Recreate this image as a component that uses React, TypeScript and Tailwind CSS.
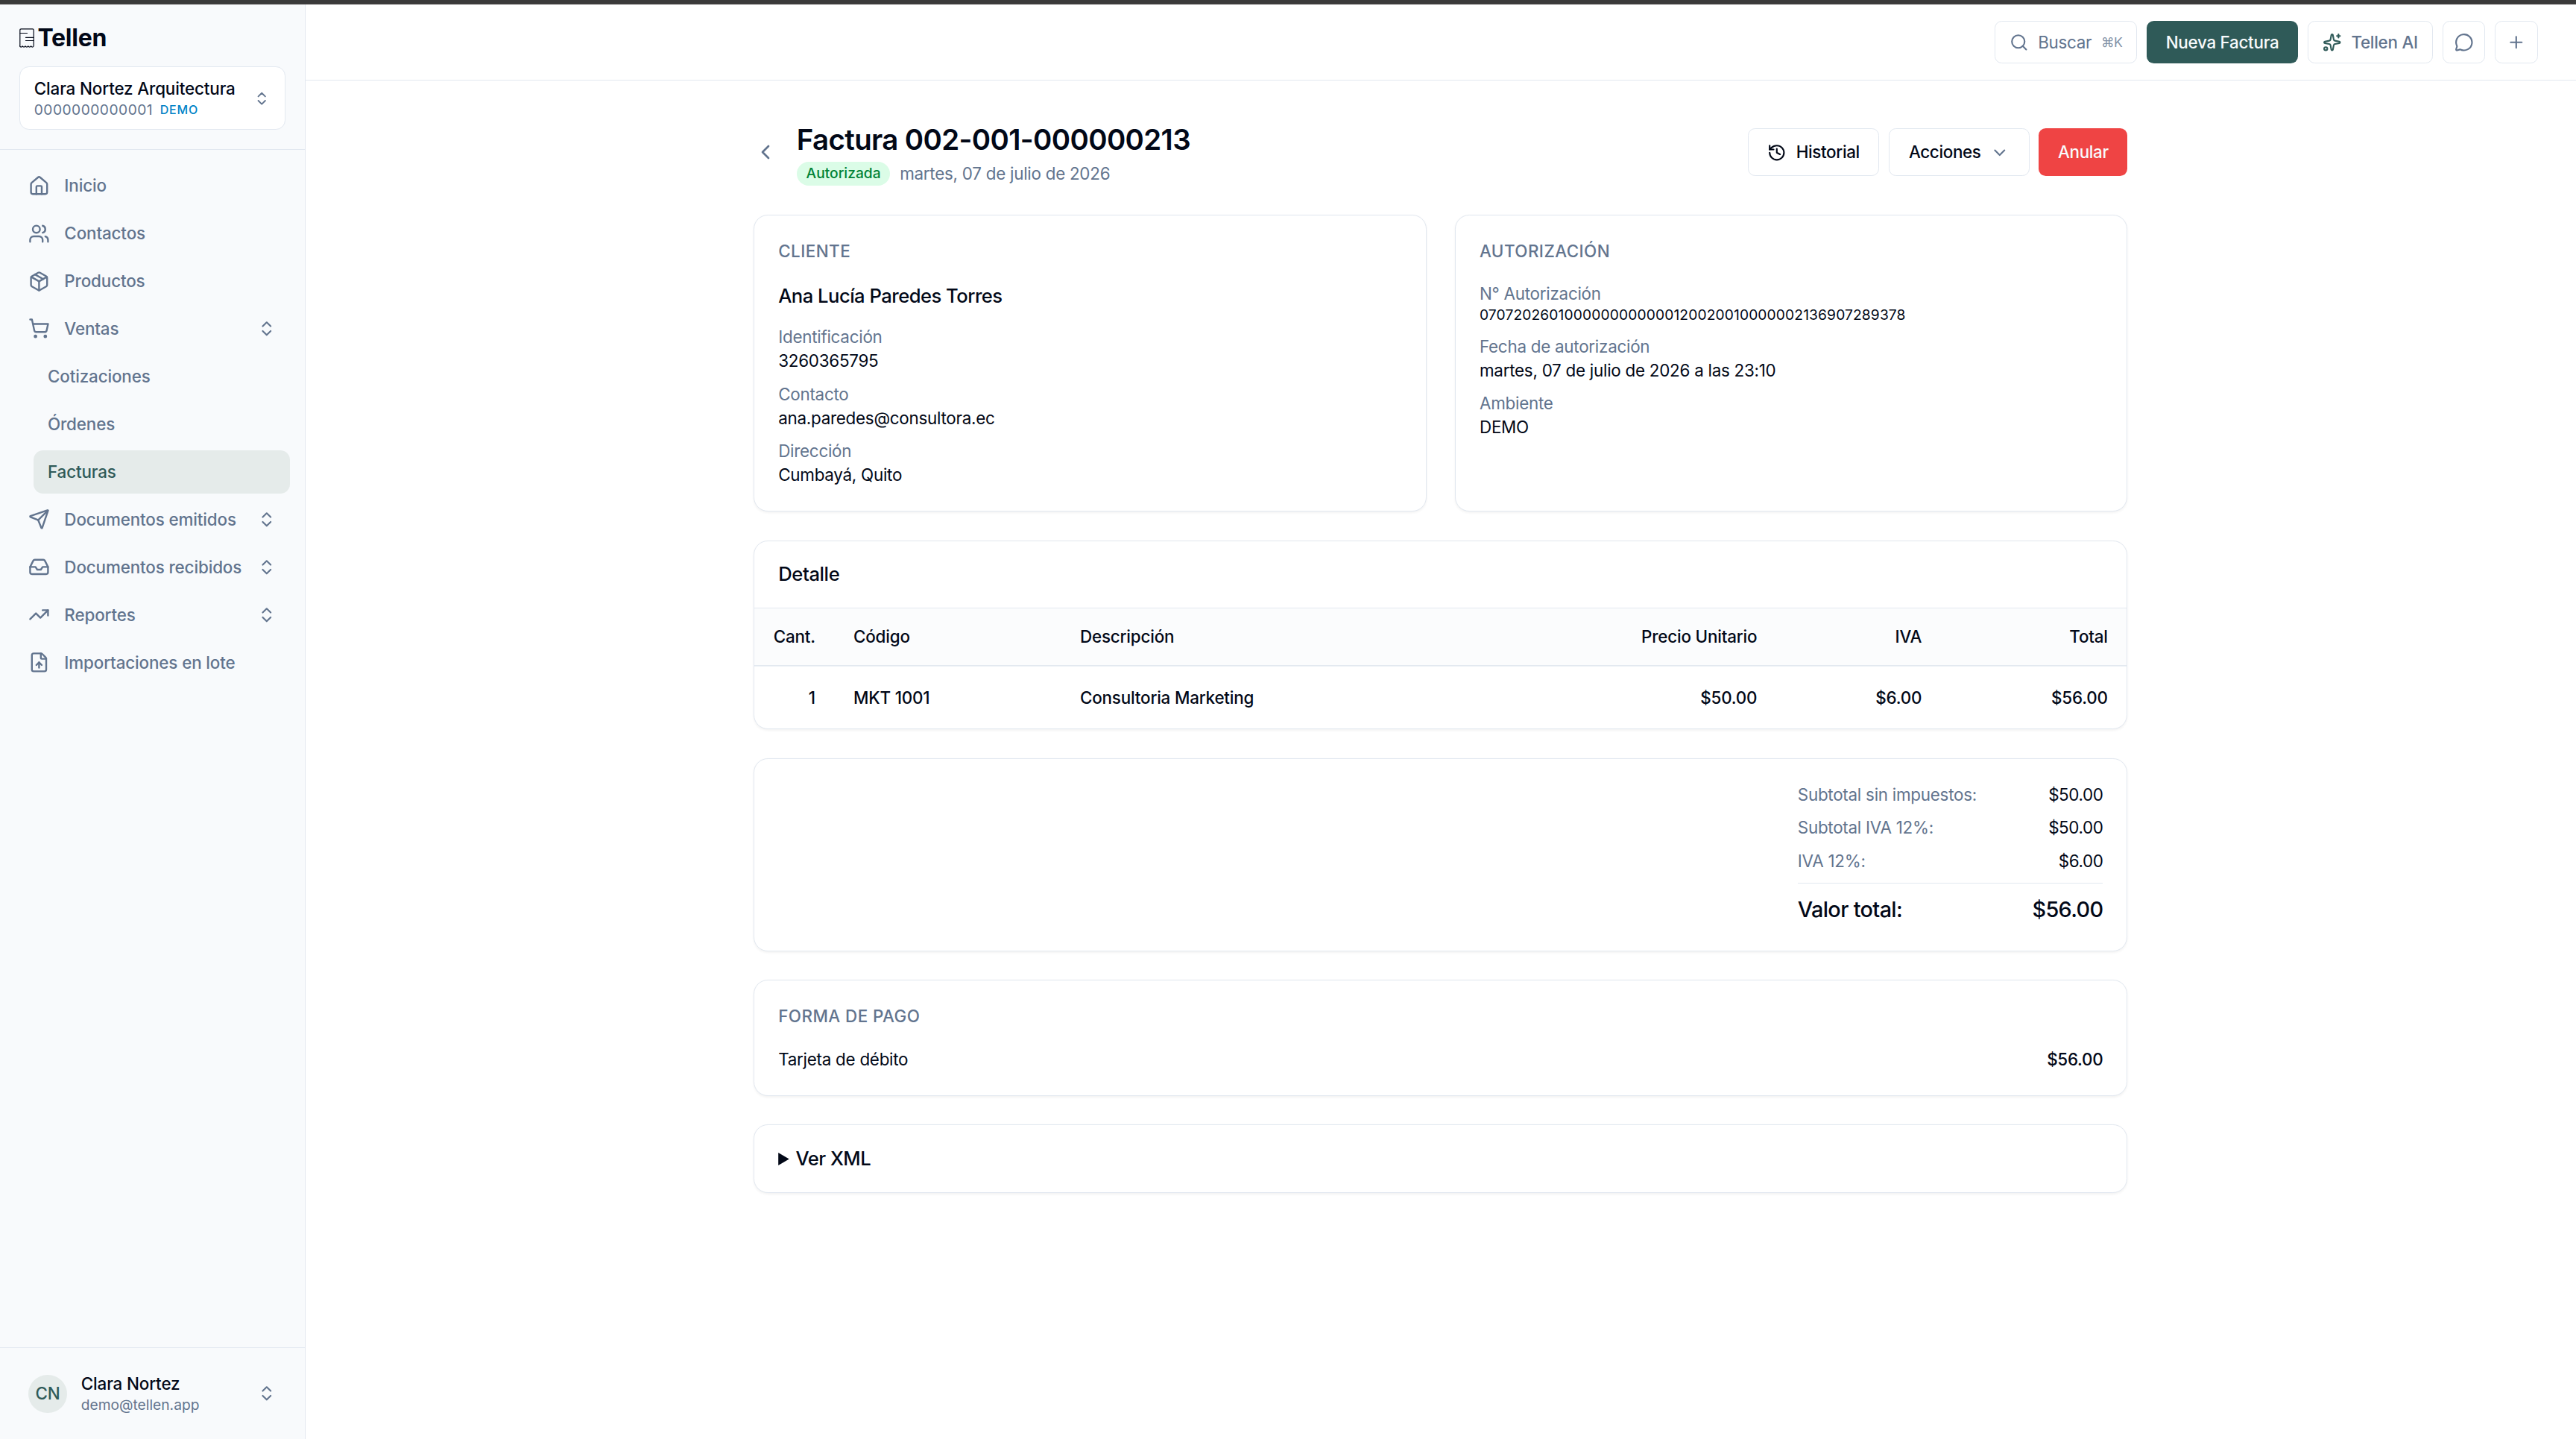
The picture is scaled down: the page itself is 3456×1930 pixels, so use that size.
import type { ReactNode } from "react";
import {
  ChevronDown,
  ChevronLeft,
  ChevronsUpDown,
  FileUp,
  History,
  House,
  Inbox,
  MessageCircle,
  Package,
  Plus,
  Search,
  Send,
  ShoppingCart,
  Sparkles,
  TrendingUp,
  Users,
  type LucideIcon,
} from "lucide-react";

type NavEntry = {
  label: string;
  icon: LucideIcon;
  expandable?: boolean;
  children?: { label: string; active?: boolean }[];
};

const navigation: NavEntry[] = [
  { label: "Inicio", icon: House },
  { label: "Contactos", icon: Users },
  { label: "Productos", icon: Package },
  {
    label: "Ventas",
    icon: ShoppingCart,
    expandable: true,
    children: [
      { label: "Cotizaciones" },
      { label: "Órdenes" },
      { label: "Facturas", active: true },
    ],
  },
  { label: "Documentos emitidos", icon: Send, expandable: true },
  { label: "Documentos recibidos", icon: Inbox, expandable: true },
  { label: "Reportes", icon: TrendingUp, expandable: true },
  { label: "Importaciones en lote", icon: FileUp },
];

const totals = [
  { label: "Subtotal sin impuestos:", value: "$50.00" },
  { label: "Subtotal IVA 12%:", value: "$50.00" },
  { label: "IVA 12%:", value: "$6.00" },
];

function Logo() {
  return (
    <div className="flex h-6 items-center gap-[3px]">
      <svg
        viewBox="0 0 20 26"
        className="h-[16.25px] w-[12.5px]"
        fill="none"
        stroke="currentColor"
        strokeWidth="1.2"
        strokeLinecap="round"
        strokeLinejoin="round"
      >
        <path d="M.8 23.500V2.400Q.8.8 2.400.8h15.200q1.600 0 1.600 1.600V23.500q-.2 1.600-1.700 1.600-1.200 0-1.900-1.300-.8 1.300-1.900 1.300t-1.900-1.300q-.8 1.300-1.900 1.300t-1.900-1.300q-.8 1.300-1.900 1.300t-1.900-1.300q-.7 1.300-1.900 1.300-1.500 0-1.900-1.600Z" />
        <path d="M1 6.500h9.500M8.500 12.300H19M8.500 16.500H19" />
      </svg>
      <span className="text-xl leading-6 font-bold tracking-[-0.008em]">Tellen</span>
    </div>
  );
}

function Sidebar() {
  return (
    <aside className="flex w-64 shrink-0 flex-col border-r border-slate-200 bg-[#f8fafc] tracking-[-0.005em]">
      <div className="border-b border-slate-200 p-4">
        <Logo />
        <button className="mt-3 flex w-full items-center justify-between rounded-lg border border-slate-200 bg-white px-3 py-2 text-left">
          <div>
            <p className="text-sm font-medium">Clara Nortez Arquitectura</p>
            <p className="flex items-center gap-1.5 text-xs tracking-wide text-slate-500">
              0000000000001
              <span className="text-[10px] font-medium tracking-wider text-[#0284c7]">
                DEMO
              </span>
            </p>
          </div>
          <ChevronsUpDown className="size-3.5 text-slate-500" />
        </button>
      </div>

      <nav className="flex flex-1 flex-col gap-1 p-3 text-sm font-medium text-slate-500">
        {navigation.map(({ label, icon: Icon, expandable, children }) => (
          <div key={label} className="flex flex-col gap-1">
            <a className="flex h-9 items-center gap-3 px-3">
              <Icon className="size-[18px] shrink-0" />
              <span className="flex-1 whitespace-nowrap">{label}</span>
              {expandable && <ChevronsUpDown className="size-4 shrink-0" />}
            </a>
            {children?.map((child) => (
              <a
                key={child.label}
                className={
                  child.active
                    ? "ml-4 flex h-9 items-center rounded-lg bg-[#e5ebea] px-3 text-[#2f5a58]"
                    : "ml-4 flex h-9 items-center px-3"
                }
              >
                {child.label}
              </a>
            ))}
          </div>
        ))}
      </nav>

      <div className="border-t border-slate-200 p-3">
        <div className="flex items-center gap-3 px-3 py-2">
          <div className="flex size-8 items-center justify-center rounded-full bg-[#e5ebea] text-sm font-medium text-[#2f5a58]">
            CN
          </div>
          <div className="flex-1">
            <p className="text-sm font-medium">Clara Nortez</p>
            <p className="text-xs tracking-normal text-slate-500">demo@tellen.app</p>
          </div>
          <ChevronsUpDown className="size-4 text-slate-500" />
        </div>
      </div>
    </aside>
  );
}

function TopBar() {
  return (
    <header className="flex h-16 shrink-0 items-center justify-end gap-2 border-b border-slate-200 px-8 text-sm font-medium tracking-[-0.012em] text-slate-500">
      <button className="flex h-9 items-center gap-2 rounded-md border border-slate-200 px-3 font-normal">
        <Search className="size-4" />
        Buscar
        <kbd className="font-[Inter] text-[11px] tracking-[-0.04em] text-slate-500/80">⌘K</kbd>
      </button>
      <button className="h-9 rounded-md bg-[#2f5a58] px-4 text-slate-50">
        Nueva Factura
      </button>
      <button className="flex h-9 items-center gap-2 rounded-md border border-slate-200 px-3">
        <Sparkles className="size-4 text-[#2f5a58]" />
        Tellen AI
      </button>
      <button className="flex size-9 items-center justify-center rounded-md border border-slate-200">
        <MessageCircle className="size-4" />
      </button>
      <button className="flex size-9 items-center justify-center rounded-md border border-slate-200">
        <Plus className="size-4" />
      </button>
    </header>
  );
}

function Card({ className = "", children }: { className?: string; children: ReactNode }) {
  return (
    <section className={`rounded-xl border border-slate-200 bg-white shadow-xs ${className}`}>
      {children}
    </section>
  );
}

function CardLabel({ children }: { children: ReactNode }) {
  return (
    <h2 className="mb-4 text-sm font-medium tracking-[0.02em] text-slate-500 uppercase">
      {children}
    </h2>
  );
}

function Field({ label, value, small }: { label: string; value: string; small?: boolean }) {
  return (
    <div>
      <dt className="text-slate-500">{label}</dt>
      <dd className={small ? "text-xs tracking-[0.007em]" : ""}>{value}</dd>
    </div>
  );
}

function InvoiceHeader() {
  return (
    <div className="flex items-center gap-4">
      <ChevronLeft className="size-5 text-slate-500" />
      <div className="flex-1">
        <h1 className="text-2xl leading-[34px] font-semibold tracking-[-0.016em]">
          Factura 002-001-000000213
        </h1>
        <div className="mt-0.5 flex items-center gap-2">
          <span className="rounded-full bg-green-100 px-2 py-0.5 text-xs font-medium tracking-normal text-green-700">
            Autorizada
          </span>
          <span className="text-sm text-slate-500">martes, 07 de julio de 2026</span>
        </div>
      </div>
      <div className="flex gap-2 text-sm font-medium tracking-[-0.015em]">
        <button className="flex h-10 items-center gap-2 rounded-md border border-slate-200 px-4">
          <History className="size-4" />
          Historial
        </button>
        <button className="flex h-10 items-center gap-2 rounded-md border border-slate-200 px-4">
          Acciones
          <ChevronDown className="size-4 text-slate-500" />
        </button>
        <button className="h-10 rounded-md bg-[#ef4444] px-4 text-slate-50">Anular</button>
      </div>
    </div>
  );
}

function DetailTable() {
  return (
    <Card className="overflow-hidden">
      <h2 className="border-b border-slate-200 px-5 py-4 font-medium tracking-[-0.015em]">Detalle</h2>
      <table className="w-full table-fixed border-separate border-spacing-0 text-sm font-medium tracking-[-0.008em]">
        <thead className="bg-slate-50/50">
          <tr className="h-12 text-left [&>th]:border-b [&>th]:border-slate-200 [&>th]:px-4 [&>th]:font-medium">
            <th className="w-[67px] text-right">Cant.</th>
            <th className="w-[190px]">Código</th>
            <th>Descripción</th>
            <th className="w-[160px] text-right">Precio Unitario</th>
            <th className="w-[138px] text-right">IVA</th>
            <th className="w-[156px] text-right">Total</th>
          </tr>
        </thead>
        <tbody>
          <tr className="[&>td]:border-t [&>td]:border-slate-200/70 [&>td]:px-4 [&>td]:py-4">
            <td className="text-right">1</td>
            <td>MKT 1001</td>
            <td>Consultoria Marketing</td>
            <td className="text-right">$50.00</td>
            <td className="text-right">$6.00</td>
            <td className="text-right">$56.00</td>
          </tr>
        </tbody>
      </table>
    </Card>
  );
}

function Totals() {
  return (
    <Card className="flex justify-end p-5">
      <div className="w-64 space-y-2 text-sm">
        {totals.map((row) => (
          <div key={row.label} className="flex justify-between">
            <span className="text-slate-500">{row.label}</span>
            <span className="tracking-[-0.018em]">{row.value}</span>
          </div>
        ))}
        <div className="flex justify-between border-t border-slate-200 pt-2 text-lg font-medium tracking-[-0.022em]">
          <span>Valor total:</span>
          <span>$56.00</span>
        </div>
      </div>
    </Card>
  );
}

function App() {
  return (
    <div className="flex h-[1206.25px] w-[2160px] flex-col overflow-hidden bg-white font-[Inter,sans-serif] text-[#020817] antialiased [zoom:1.6]">
      <div className="h-[3.75px] shrink-0 border-b border-[#484546] bg-[#3a3a3a]" />
      <div className="flex min-h-0 flex-1">
        <Sidebar />
        <div className="flex flex-1 flex-col">
          <TopBar />
          <main className="mx-auto w-full max-w-6xl space-y-6 py-8 tracking-[-0.01em]">
            <InvoiceHeader />
            <div className="grid grid-cols-2 gap-6">
              <Card className="p-5">
                <CardLabel>Cliente</CardLabel>
                <p className="mb-3 font-medium tracking-[-0.02em]">Ana Lucía Paredes Torres</p>
                <dl className="space-y-2 text-sm">
                  <Field label="Identificación" value="3260365795" />
                  <Field label="Contacto" value="ana.paredes@consultora.ec" />
                  <Field label="Dirección" value="Cumbayá, Quito" />
                </dl>
              </Card>
              <Card className="p-5">
                <CardLabel>Autorización</CardLabel>
                <dl className="space-y-2 text-sm">
                  <Field
                    label="N° Autorización"
                    value="0707202601000000000000120020010000002136907289378"
                    small
                  />
                  <Field
                    label="Fecha de autorización"
                    value="martes, 07 de julio de 2026 a las 23:10"
                  />
                  <Field label="Ambiente" value="DEMO" />
                </dl>
              </Card>
            </div>
            <DetailTable />
            <Totals />
            <Card className="p-5">
              <CardLabel>Forma de pago</CardLabel>
              <div className="flex justify-between text-sm">
                <span>Tarjeta de débito</span>
                <span className="font-medium">$56.00</span>
              </div>
            </Card>
            <Card className="px-5 py-4">
              <details>
                <summary className="font-medium tracking-[-0.02em]">Ver XML</summary>
              </details>
            </Card>
          </main>
        </div>
      </div>
    </div>
  );
}

export default App;
